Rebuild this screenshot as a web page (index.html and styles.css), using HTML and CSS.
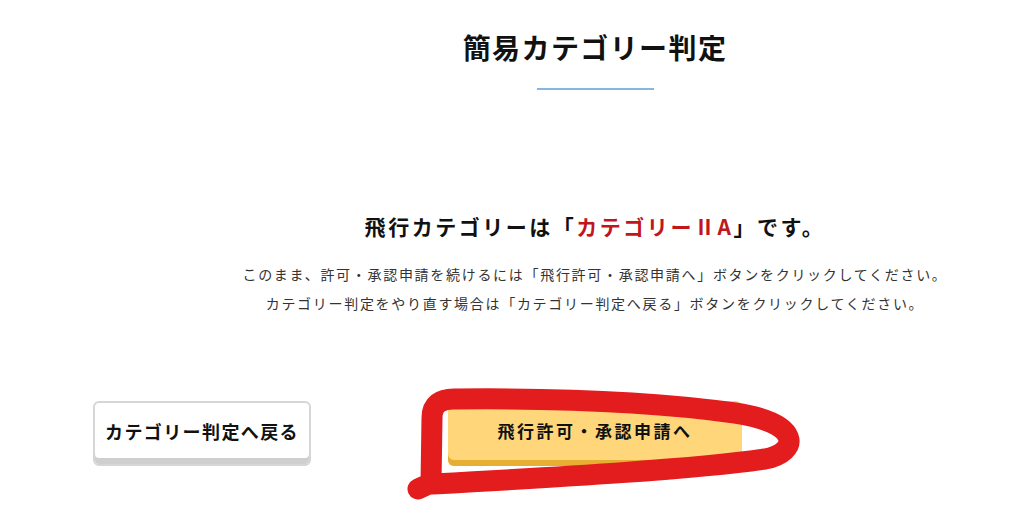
FILE: index.html
```html
<!DOCTYPE html>
<html lang="ja">
<head>
    <meta charset="UTF-8">
    <title>簡易カテゴリー判定</title>
    <link rel="stylesheet" href="styles.css">
</head>
<body>
<div id="wrapper">
    <h1 class="title">簡易カテゴリー判定</h1>
    <div class="title-line"></div>

    <h2 class="result">飛行カテゴリーは「<span class="category">カテゴリーⅡA</span>」です。</h2>
    <p class="note">
        このまま、許可・承認申請を続けるには「飛行許可・承認申請へ」ボタンをクリックしてください。<br>
        カテゴリー判定をやり直す場合は「カテゴリー判定へ戻る」ボタンをクリックしてください。
    </p>

    <div class="actions">
        <button class="btn btn-back">カテゴリー判定へ戻る</button>
        <button class="btn btn-next">飛行許可・承認申請へ</button>
    </div>
</div>

<svg class="mark" width="1024" height="516" viewBox="0 0 1024 516">
    <path d="M 418 489 L 431 483 L 432 418 Q 432 398 456 399 C 560 398 650 401 735 413 C 802 423 800 452 765 459 C 700 469 560 477 433 484"
          fill="none" stroke="#e31c1e" stroke-width="21" stroke-linecap="round" stroke-linejoin="round"/>
</svg>
</body>
</html>
```

FILE: styles.css
```css
html * {
    box-sizing: border-box;
}

body {
    margin: 0;
    overflow: hidden;
    color: #333;
    background: #fff;
    font-family: "Noto Sans CJK JP", "Noto Sans", sans-serif;
}

#wrapper {
    padding: 26px 0 0 166px;
    text-align: center;
}

.title {
    margin: 0;
    color: #111;
    font-size: 28px;
    font-weight: 700;
    line-height: 42px;
    letter-spacing: .05em;
}

.title-line {
    width: 117px;
    height: 2px;
    margin: 20px auto 0;
    background: #86b6e2;
}

.result {
    margin: 120px 0 0;
    color: #111;
    font-size: 21px;
    font-weight: 700;
    line-height: 32px;
    letter-spacing: .12em;
}

.category {
    color: #c0161c;
}

.note {
    margin: 18px 0 0;
    font-size: 14px;
    line-height: 29px;
    letter-spacing: 1.7px;
}

.actions {
    display: flex;
    gap: 137px;
    margin: 83px 0 0 -73px;
}

.btn {
    height: 65px;
    padding: 0 0 6px;
    border-radius: 6px;
    font-family: inherit;
    font-weight: 700;
    color: #111;
    cursor: pointer;
}

.btn-back {
    width: 218px;
    background: #fff;
    border: 2px solid #d6d6d6;
    box-shadow: inset 0 -6px 0 #cfcfcf;
    font-size: 18px;
    letter-spacing: 1.4px;
}

.btn-next {
    width: 294px;
    background: #ffd67a;
    border: 0;
    box-shadow: inset 0 -6px 0 #e6ae32;
    font-size: 17px;
    letter-spacing: 2.5px;
}

.mark {
    position: absolute;
    left: 0;
    top: 0;
    pointer-events: none;
}
```
